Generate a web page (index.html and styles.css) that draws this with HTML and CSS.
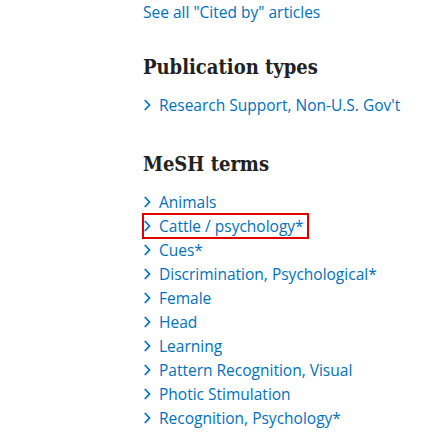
FILE: index.html
```html
<!DOCTYPE html>
<html>
<head>
<meta charset="utf-8">
<link rel="stylesheet" href="styles.css">
</head>
<body>
<div class="page">
  <a class="see-all" href="#">See all "Cited by" articles</a>
  <section class="section">
    <h2 class="heading">Publication types</h2>
    <ul class="list">
      <li class="item"><span class="chev"><svg width="8" height="12" viewBox="0 0 8 12"><path d="M1.8 1 L6.5 6 L1.8 11" fill="none" stroke="currentColor" stroke-width="1.7"/></svg></span><a href="#">Research Support, Non-U.S. Gov't</a></li>
    </ul>
  </section>
  <section class="section">
    <h2 class="heading">MeSH terms</h2>
    <ul class="list">
      <li class="item"><span class="chev"><svg width="8" height="12" viewBox="0 0 8 12"><path d="M1.8 1 L6.5 6 L1.8 11" fill="none" stroke="currentColor" stroke-width="1.7"/></svg></span><a href="#">Animals</a></li>
      <li class="item highlighted"><span class="chev"><svg width="8" height="12" viewBox="0 0 8 12"><path d="M1.8 1 L6.5 6 L1.8 11" fill="none" stroke="currentColor" stroke-width="1.7"/></svg></span><a href="#">Cattle / psychology*</a></li>
      <li class="item"><span class="chev"><svg width="8" height="12" viewBox="0 0 8 12"><path d="M1.8 1 L6.5 6 L1.8 11" fill="none" stroke="currentColor" stroke-width="1.7"/></svg></span><a href="#">Cues*</a></li>
      <li class="item"><span class="chev"><svg width="8" height="12" viewBox="0 0 8 12"><path d="M1.8 1 L6.5 6 L1.8 11" fill="none" stroke="currentColor" stroke-width="1.7"/></svg></span><a href="#">Discrimination, Psychological*</a></li>
      <li class="item"><span class="chev"><svg width="8" height="12" viewBox="0 0 8 12"><path d="M1.8 1 L6.5 6 L1.8 11" fill="none" stroke="currentColor" stroke-width="1.7"/></svg></span><a href="#">Female</a></li>
      <li class="item"><span class="chev"><svg width="8" height="12" viewBox="0 0 8 12"><path d="M1.8 1 L6.5 6 L1.8 11" fill="none" stroke="currentColor" stroke-width="1.7"/></svg></span><a href="#">Head</a></li>
      <li class="item"><span class="chev"><svg width="8" height="12" viewBox="0 0 8 12"><path d="M1.8 1 L6.5 6 L1.8 11" fill="none" stroke="currentColor" stroke-width="1.7"/></svg></span><a href="#">Learning</a></li>
      <li class="item"><span class="chev"><svg width="8" height="12" viewBox="0 0 8 12"><path d="M1.8 1 L6.5 6 L1.8 11" fill="none" stroke="currentColor" stroke-width="1.7"/></svg></span><a href="#">Pattern Recognition, Visual</a></li>
      <li class="item"><span class="chev"><svg width="8" height="12" viewBox="0 0 8 12"><path d="M1.8 1 L6.5 6 L1.8 11" fill="none" stroke="currentColor" stroke-width="1.7"/></svg></span><a href="#">Photic Stimulation</a></li>
      <li class="item"><span class="chev"><svg width="8" height="12" viewBox="0 0 8 12"><path d="M1.8 1 L6.5 6 L1.8 11" fill="none" stroke="currentColor" stroke-width="1.7"/></svg></span><a href="#">Recognition, Psychology*</a></li>
    </ul>
  </section>
</div>
</body>
</html>
```
FILE: styles.css
```css
html, body {
  margin: 0;
  padding: 0;
  background: #ffffff;
}
.page {
  padding: 0 0 0 143px;
  font-family: "Open Sans", "Noto Sans", sans-serif;
  font-size: 15.5px;
  color: #212121;
}
a {
  color: #0071bc;
  text-decoration: none;
}
.see-all {
  display: block;
  line-height: 24px;
}
.section {
  padding-top: 27px;
}
.list {
  list-style: none;
  margin: 0 0 4px 0;
  padding: 0;
}
.heading {
  margin: 0 0 10px 0;
  font-family: "DejaVu Serif", serif;
  font-weight: bold;
  font-stretch: condensed;
  font-size: 20px;
  line-height: 32px;
  color: #212121;
}
.item {
  display: flex;
  align-items: center;
  height: 24px;
  width: fit-content;
  padding-right: 4px;
}
.chev {
  display: flex;
  width: 16px;
  color: #0071bc;
}
.highlighted {
  outline: 2px solid #e00000;
  outline-offset: -1px;
}
```
